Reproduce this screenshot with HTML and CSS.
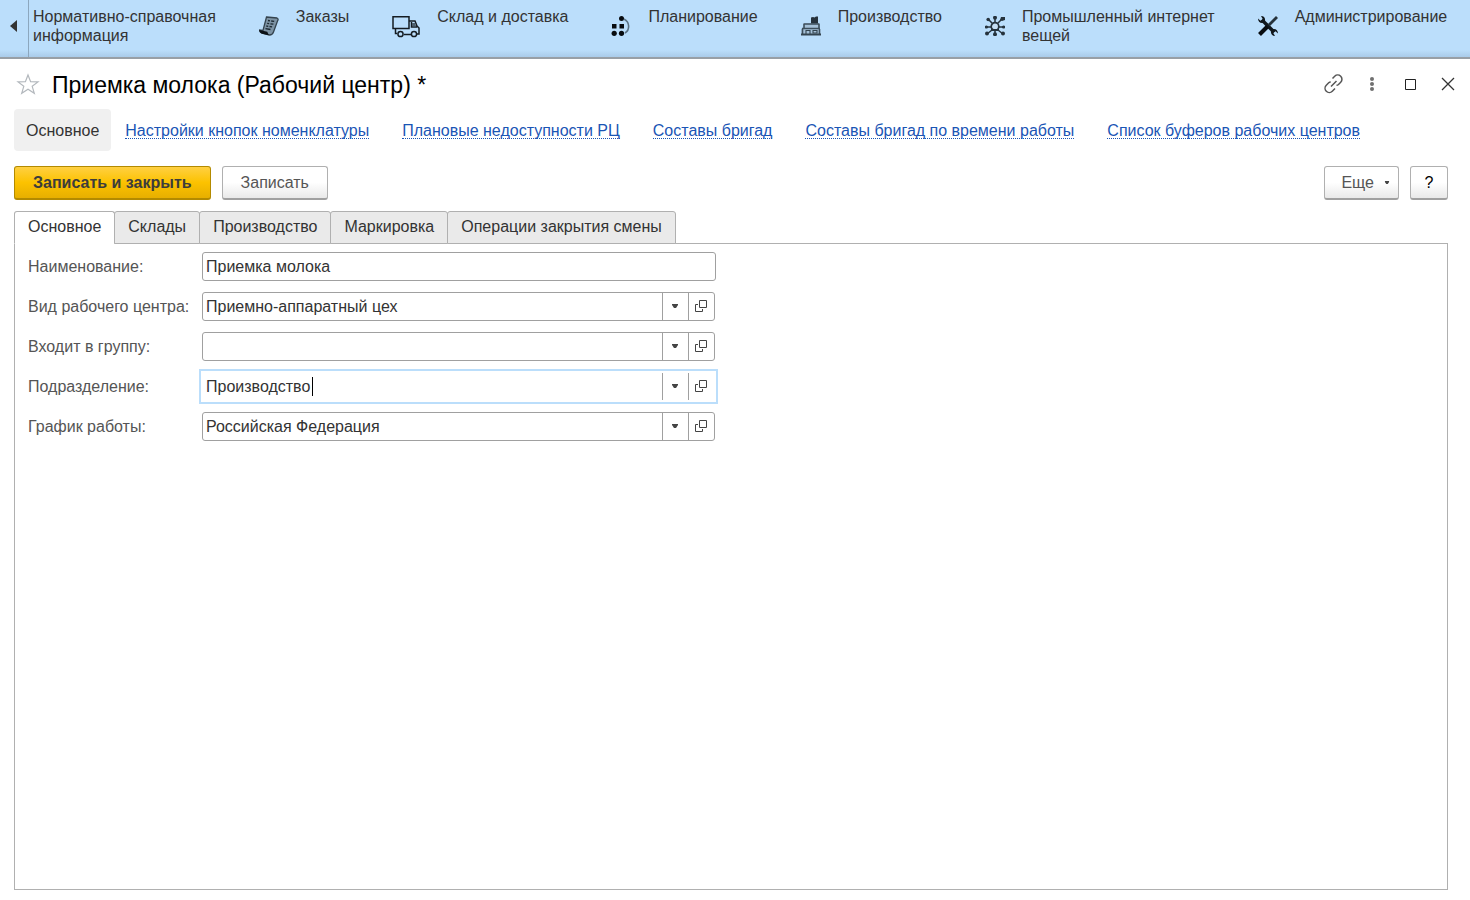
FILE: index.html
```html
<!DOCTYPE html>
<html lang="ru">
<head>
<meta charset="utf-8">
<title>Приемка молока (Рабочий центр)</title>
<link rel="stylesheet" href="styles.css">
</head>
<body>
<svg class="defs" width="0" height="0" aria-hidden="true">
  <symbol id="open" viewBox="0 0 12 12"><path d="M4.500 .5h7v7h-7zM3 4.500H.5v7h7V9" fill="none" stroke="#444"/></symbol>
  <symbol id="down" viewBox="0 0 6 4"><path d="M0 0h6v1L4 4H2L0 1z" fill="#444"/></symbol>
</svg>
<nav class="sections" aria-label="Разделы">
  <button class="scroll" aria-label="Назад"><svg width="8" height="12" viewBox="0 0 8 12"><path d="M8 0v12L1 6z" fill="#333"/></svg></button>
  <div class="section-list">
    <a class="section" href="#">Нормативно-справочная<br>информация</a>
    <a class="section" href="#">
      <svg width="20" height="20" viewBox="0 0 20 20"><path d="M7.500 1l10.500 1c1.500.5 1.200 2 .5 3L14.500 16c-.7 2-2 3-4 3L2.500 17C1 16 .5 15 .5 14l3.500.3z" fill="#7d93a4" stroke="#34434e" stroke-width="1.300"/><path d="M9 4.500l2 .3m1.200.2l3 .4M8.200 7.300l2 .3m1.200.2l3 .4M7.300 10l2 .3m1.200.2l2.600.4M6.500 12.700l5 .8" stroke="#1c2831" stroke-width="1.300"/><path d="M.3 14l8 1.800 1.500 3.500L3 17.800C1 17 .3 15.500.3 14z" fill="#0b1116"/></svg>
      <span>Заказы</span></a>
    <a class="section" href="#">
      <svg width="28" height="22" viewBox="0 0 28 22"><path d="M1 0.800h16v11.700H1zM17 5h6l2 5 2 2v6h-2M19.500 6v5H25M3.500 13v4.500H5M12 18.500h7" fill="none" stroke="#151c22" stroke-width="1.500"/><path d="M20 7h3l1 3h-4z" fill="#4c5e6b"/><circle cx="8.500" cy="18" r="2.600" fill="#bbdefb" stroke="#151c22" stroke-width="1.500"/><circle cx="22" cy="18" r="2.600" fill="#bbdefb" stroke="#151c22" stroke-width="1.500"/></svg>
      <span>Склад и доставка</span></a>
    <a class="section" href="#">
      <svg width="20" height="20" viewBox="0 0 20 20"><g fill="#080c10"><circle cx="10.500" cy="2.500" r="2.500"/><path d="M1 8h4.500v4.500H1zM8.500 8H13v4.500H8.500z"/><circle cx="3.200" cy="17.300" r="2.600"/><circle cx="10.500" cy="17.300" r="2.600"/></g><path d="M13 3c6 3 6 11 1 14" fill="none" stroke="#5b7284" stroke-width="1.600"/></svg>
      <span>Планирование</span></a>
    <a class="section" href="#">
      <svg width="20" height="20" viewBox="0 0 20 20"><path d="M10 1.500l2-.5 1.500.5L15 .5h2V8h-7z" fill="#26323c"/><path d="M3 7.500h15v4.500l1.500 6.500h-19V12H3z" fill="#a5c0d7"/><path d="M2.500 8h16M3 8v4M18 8v4M1 12.500h18M1.500 13v6M18.500 13v6" fill="none" stroke="#3d4e5b" stroke-width="1.600"/><path d="M5 18v-3.500h4V18M12 14.500h4v2.500h-4z" fill="none" stroke="#34444f" stroke-width="1.100"/><path d="M0 18.500h20" stroke="#34444f" stroke-width="2"/></svg>
      <span>Производство</span></a>
    <a class="section" href="#">
      <svg width="20" height="20" viewBox="0 0 20 20"><path d="M10 0v7M10 13v7M0 11h6M14 11h6M3 3l5 5M17 3l-5 5M2 18l5-4M18 18l-5-4" stroke="#26333d" stroke-width="1.500"/><circle cx="10" cy="10.500" r="3.800" fill="#c5dff5" stroke="#26333d" stroke-width="1.700"/><path d="M6 14h8" stroke="#26333d" stroke-width="2"/><g fill="#26333d"><circle cx="10" cy="1.700" r="2"/><circle cx="10" cy="18.300" r="2"/><circle cx="1.500" cy="11" r="1.600"/><circle cx="18.500" cy="11" r="1.600"/><circle cx="3.200" cy="3.500" r="1.800"/><path d="M15 4l1-3h4v3l-3 1z"/><circle cx="2" cy="17.500" r="2"/><circle cx="18" cy="17.500" r="2"/></g></svg>
      <span>Промышленный интернет<br>вещей</span></a>
    <a class="section" href="#">
      <svg width="20" height="20" viewBox="0 0 20 20"><path d="M4 4l12 12" stroke="#11181d" stroke-width="3.400"/><path d="M3 0c3 0 4.500 2 4 5L5 7C2 7.500 0 5.500 0 2.500L2.500 4.700 4.700 3zM17 20c-3 0-4.500-2-4-5l2-2c3-.5 5 1.500 5 4.500l-2.500-2.200-2.200 1.700z" fill="#11181d"/><path d="M19 1l-8 8" stroke="#26323b" stroke-width="2.800"/><path d="M9.500 10.500l-8 8" stroke="#080c10" stroke-width="4"/></svg>
      <span>Администрирование</span></a>
  </div>
</nav>
<main class="window">
  <header class="titlebar">
    <button class="icon-btn" aria-label="В избранное"><svg width="24" height="22" viewBox="0 0 24 22"><path d="M12 2l2.600 6.700 7.400.2-5.800 4.400 2.100 7L12 16.200l-6.300 4.100 2.100-7L2 8.900l7.400-.2z" fill="none" stroke="#b3b8bd" stroke-width="1.200"/></svg></button>
    <h1>Приемка молока (Рабочий центр) *</h1>
    <div class="window-tools">
      <button class="icon-btn" aria-label="Получить ссылку"><svg width="20" height="20" viewBox="0 0 20 20"><g fill="none" stroke="#555" stroke-width="1.500"><path d="M8.500 4.500l2.200-2.200a4.200 4.200 0 0 1 6 6l-2.200 2.200q-.8.700-2 .7M11 14.500l-2.700 2.700a4.200 4.200 0 0 1-6-6l2.400-2.400q.8-.7 2-.7M7 12.500l5.500-5.500"/></g></svg></button>
      <button class="icon-btn" aria-label="Меню"><svg width="20" height="20" viewBox="0 0 20 20"><g fill="#707070"><circle cx="10" cy="5" r="2"/><circle cx="10" cy="10" r="2"/><circle cx="10" cy="15" r="2"/></g></svg></button>
      <button class="icon-btn" aria-label="Развернуть"><svg width="20" height="20" viewBox="0 0 20 20"><path d="M5.500 5.500h10v10h-10z" fill="none" stroke="#222"/></svg></button>
      <button class="icon-btn" aria-label="Закрыть"><svg width="20" height="20" viewBox="0 0 20 20"><path d="M4 4l12 12M16 4L4 16" stroke="#333" stroke-width="1.300"/></svg></button>
    </div>
  </header>
  <nav class="links" aria-label="Навигация формы">
    <a class="current" href="#">Основное</a>
    <div class="link-list">
      <a href="#">Настройки кнопок номенклатуры</a>
      <a href="#">Плановые недоступности РЦ</a>
      <a href="#">Составы бригад</a>
      <a href="#">Составы бригад по времени работы</a>
      <a href="#">Список буферов рабочих центров</a>
    </div>
  </nav>
  <div class="commands">
    <button class="btn primary">Записать и закрыть</button>
    <button class="btn">Записать</button>
    <button class="btn more">Еще <svg width="6" height="3" viewBox="0 0 6 4"><use href="#down"/></svg></button>
    <button class="btn help">?</button>
  </div>
  <div class="tabs" role="tablist">
    <button class="tab active" role="tab" aria-selected="true">Основное</button>
    <button class="tab" role="tab">Склады</button>
    <button class="tab" role="tab">Производство</button>
    <button class="tab" role="tab">Маркировка</button>
    <button class="tab" role="tab">Операции закрытия смены</button>
  </div>
  <form class="panel">
    <div class="row"><label for="name">Наименование:</label>
      <div class="field plain"><input id="name" value="Приемка молока"></div></div>
    <div class="row"><label for="kind">Вид рабочего центра:</label>
      <div class="field"><input id="kind" value="Приемно-аппаратный цех"><button type="button" aria-label="Выбрать"><svg width="6" height="4"><use href="#down"/></svg></button><button type="button" aria-label="Открыть"><svg width="12" height="12"><use href="#open"/></svg></button></div></div>
    <div class="row"><label for="group">Входит в группу:</label>
      <div class="field"><input id="group" value=""><button type="button" aria-label="Выбрать"><svg width="6" height="4"><use href="#down"/></svg></button><button type="button" aria-label="Открыть"><svg width="12" height="12"><use href="#open"/></svg></button></div></div>
    <div class="row"><label for="dept">Подразделение:</label>
      <div class="field focused"><input id="dept" value="Производство"><span class="caret"></span><button type="button" aria-label="Выбрать"><svg width="6" height="4"><use href="#down"/></svg></button><button type="button" aria-label="Открыть"><svg width="12" height="12"><use href="#open"/></svg></button></div></div>
    <div class="row"><label for="schedule">График работы:</label>
      <div class="field"><input id="schedule" value="Российская Федерация"><button type="button" aria-label="Выбрать"><svg width="6" height="4"><use href="#down"/></svg></button><button type="button" aria-label="Открыть"><svg width="12" height="12"><use href="#open"/></svg></button></div></div>
  </form>
</main>
</body>
</html>
```
FILE: styles.css
```css
* { box-sizing: border-box; }
body {
  margin: 0;
  min-height: 100vh;
  display: flex;
  flex-direction: column;
  background: #fff;
  color: #333;
  font: 16px/19px "Liberation Sans", Arial, sans-serif;
}
button, input { font: inherit; color: inherit; }
button { padding: 0; border: 0; background: none; }
svg { display: block; flex: none; }
.defs { position: absolute; }

.sections {
  display: flex;
  height: 59px;
  overflow: hidden;
  background: linear-gradient(#bbdefb 50px, #a9cbe9 57px);
  border-bottom: 2px solid #989fa6;
}
.scroll {
  width: 29px;
  padding: 0 0 5px 9px;
  border-right: 1px solid #8ca7be;
}
.section-list { display: flex; gap: 43px; padding: 7px 0 0 4px; }
.section {
  display: flex;
  gap: 17px;
  color: #333;
  text-decoration: none;
  white-space: nowrap;
}
.section svg { margin-top: 9px; }

.window { flex: 1; display: flex; flex-direction: column; padding: 0 22px 10px 14px; }
.titlebar { display: flex; align-items: center; height: 50px; padding-left: 2px; }
h1 { margin: 2px 0 0 12px; font-size: 23px; line-height: 28px; font-weight: 400; color: #000; }
.window-tools { display: flex; gap: 18px; margin: 0 -10px 0 auto; }

.links { display: flex; align-items: center; gap: 14px; white-space: nowrap; }
.current { padding: 12px 12px 11px; border-radius: 4px; background: #f0f0f0; color: #333; text-decoration: none; }
.link-list { display: flex; gap: 33px; }
.link-list a { padding-top: 2px; color: #1a55b5; text-decoration: none; border-bottom: 1px dotted #1a55b5; line-height: 15px; }

.commands { display: flex; gap: 11px; margin-top: 15px; }
.btn {
  height: 34px;
  padding: 0 18px;
  border: 1px solid #b0b0b0;
  border-bottom: 2px solid #a0a0a0;
  border-radius: 3px;
  background: linear-gradient(#fff 50%, #e9e9e9);
  color: #555;
}
.primary {
  border-color: #b38a00;
  background: linear-gradient(#ffd042, #fcc200 50%, #e7af00);
  color: #3c3c3c;
  font-weight: 700;
}
.more { display: flex; align-items: center; gap: 10px; margin-left: auto; padding: 0 8px 0 16px; }
.help { width: 38px; padding: 0; color: #000; }

.tabs { display: flex; margin-top: 11px; z-index: 1; }
.tab {
  height: 33px;
  margin-right: -1px;
  padding: 0 13px 2px;
  border: 1px solid #b0b0b0;
  border-radius: 3px 3px 0 0;
  background: #eaeaea;
  white-space: nowrap;
}
.active { background: #fff; border-bottom-color: #fff; }
.panel {
  flex: 1;
  display: flex;
  flex-direction: column;
  gap: 11px;
  margin-top: -1px;
  padding: 8px 13px;
  border: 1px solid #b0b0b0;
}
.row { display: flex; align-items: center; }
.row label { width: 174px; color: #555; white-space: nowrap; }
.field {
  display: flex;
  width: 513px;
  height: 29px;
  border: 1px solid #a0a0a0;
  border-radius: 3px;
}
.plain { width: 514px; }
.field input { flex: 1; min-width: 0; padding: 0 3px; border: 0; outline: 0; background: none; }
.field button { display: grid; place-items: center; width: 26px; padding: 0 2px 2px 0; border-left: 1px solid #a0a0a0; }
.focused {
  position: relative;
  border-color: transparent;
  border-radius: 0;
  outline: 2px solid #bbdefb;
  outline-offset: 1px;
}
.caret { position: absolute; left: 109px; top: 4px; width: 1px; height: 19px; background: #000; }
```
